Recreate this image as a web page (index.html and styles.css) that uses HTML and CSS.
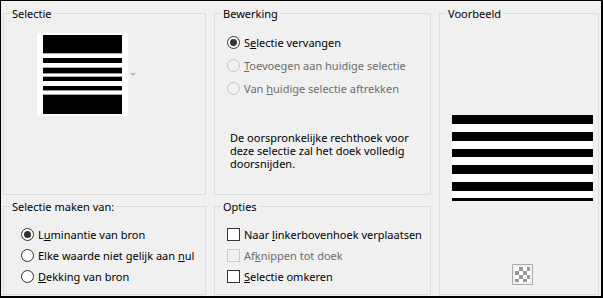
FILE: index.html
```html
<html>
<head>
<title>Selectie</title>
<link rel="stylesheet" href="styles.css">
</head>
<body>
<div class="dialog">

<fieldset class="group sel">
  <legend>Selectie</legend>
  <div class="picker">
    <div class="swatch"><div class="bars"></div></div>
    <span class="arrow"></span>
  </div>
</fieldset>

<fieldset class="group edit">
  <legend>Bewerking</legend>
  <div class="opts first">
    <label class="opt"><span class="radio on"></span><span>S<u>e</u>lectie vervangen</span></label>
    <label class="opt off"><span class="radio"></span><span><u>T</u>oevoegen aan huidige selectie</span></label>
    <label class="opt off"><span class="radio"></span><span>Van <u>h</u>uidige selectie aftrekken</span></label>
  </div>
  <p class="note"><span>De oorspronkelijke rechthoek voor</span><span>deze selectie zal het doek volledig</span><span>doorsnijden.</span></p>
</fieldset>

<fieldset class="group preview">
  <legend>Voorbeeld</legend>
  <div class="stripes">
    <div class="b9"></div><div class="w8"></div>
    <div class="b9"></div><div class="w8"></div>
    <div class="b8"></div><div class="w8"></div>
    <div class="b9"></div><div class="w8"></div>
    <div class="b9"></div><div class="w7"></div>
    <div class="b3"></div>
  </div>
  <div class="checker"><div></div></div>
</fieldset>

<fieldset class="group source">
  <legend>Selectie maken van:</legend>
  <div class="opts small">
    <label class="opt"><span class="radio on"></span><span>L<u>u</u>minantie van bron</span></label>
    <label class="opt"><span class="radio"></span><span>Elke waarde niet gelijk aan <u>n</u>ul</span></label>
    <label class="opt"><span class="radio"></span><span><u>D</u>ekking van bron</span></label>
  </div>
</fieldset>

<fieldset class="group extra">
  <legend>Opties</legend>
  <div class="opts small">
    <label class="opt"><span class="check"></span><span>Naar <u>l</u>inkerbovenhoek verplaatsen</span></label>
    <label class="opt off"><span class="check"></span><span>Af<u>k</u>nippen tot doek</span></label>
    <label class="opt"><span class="check"></span><span><u>S</u>electie omkeren</span></label>
  </div>
</fieldset>

</div>
</body>
</html>
```

FILE: styles.css
```css
body{
margin:0;
font-family:"Noto Sans","Liberation Sans",sans-serif;
font-size:11px;
color:#000;
}
.dialog{
width:603px;
height:298px;
box-sizing:border-box;
border:1px solid #000;
border-right-width:2px;
border-bottom-width:2px;
background:#f0f0f0;
padding:5px 0 0 2px;
display:grid;
grid-template-columns:203px 217px 160px;
grid-template-rows:189px 96px;
column-gap:8px;
row-gap:4px;
}
.group{
margin:0;
padding:0;
min-width:0;
border:1px solid #dcdcdc;
box-sizing:border-box;
}
.group legend{
margin-left:6px;
padding:0 2px;
line-height:15px;
}
.sel{grid-column:1;grid-row:1;}
.edit{grid-column:2;grid-row:1;}
.preview{grid-column:3;grid-row:1 / 3;}
.source{grid-column:1;grid-row:2;}
.extra{grid-column:2;grid-row:2;}

/* selectie keuze */
.picker{
display:flex;
align-items:center;
margin:12px 0 0 33px;
}
.swatch{
width:91px;
height:83px;
box-sizing:border-box;
padding:2px 6px;
background:#fff;
}
.bars{
height:79px;
background:linear-gradient(#000 0 18px,#aaa 18px 19px,#fff 19px 23px,#000 23px 28px,#fff 28px 32px,#aaa 32px 33px,#000 33px 38px,#999 38px 39px,#fff 39px 41px,#aaa 41px 42px,#000 42px 46px,#fff 46px 51px,#000 51px 55px,#999 55px 56px,#fff 56px 59px,#aaa 59px 60px,#000 60px);
}
.arrow{
margin-left:2px;
width:0;
height:0;
border-left:3px solid transparent;
border-right:3px solid transparent;
border-top:3px solid #b4b4b4;
}

/* radio en checkbox */
.opts{
margin-left:12px;
}
.opts.first{
margin-top:10px;
}
.opts.small{
margin-top:10px;
}
.source .opts{
margin-left:17px;
}
.opt{
display:flex;
align-items:center;
height:23px;
white-space:nowrap;
}
.small .opt{
height:21px;
}
.opt.off{
color:#6d6d6d;
}
.radio{
position:relative;
width:13px;
height:13px;
box-sizing:border-box;
border:1px solid #333;
border-radius:50%;
background:#fff;
margin-right:4px;
flex:none;
}
.radio.on::after{
content:"";
position:absolute;
left:2px;
top:2px;
width:7px;
height:7px;
border-radius:50%;
background:#333;
}
.off .radio{
border-color:#c4c4c4;
background:#f0f0f0;
}
.check{
width:13px;
height:13px;
box-sizing:border-box;
border:1px solid #333;
background:#fff;
margin-right:4px;
flex:none;
}
.off .check{
border-color:#ccc;
background:#f0f0f0;
}
.note{
margin:31px 0 0 15px;
}
.note span{
display:block;
height:13px;
line-height:13px;
}

/* voorbeeld */
.stripes{
margin:94px 0 0 12px;
width:141px;
background:#fff;
}
.b9{height:9px;background:#000;}
.b8{height:8px;background:#000;}
.b3{height:3px;background:#000;}
.w8{height:8px;}
.w7{height:7px;}
.checker{
margin:63px 0 0 72px;
width:21px;
height:21px;
box-sizing:border-box;
border:1px solid #adadad;
padding:2px;
}
.checker div{
width:15px;
height:15px;
background:repeating-conic-gradient(#999 0 25%,#fff 0 50%) 0 0/8px 8px;
}
```
